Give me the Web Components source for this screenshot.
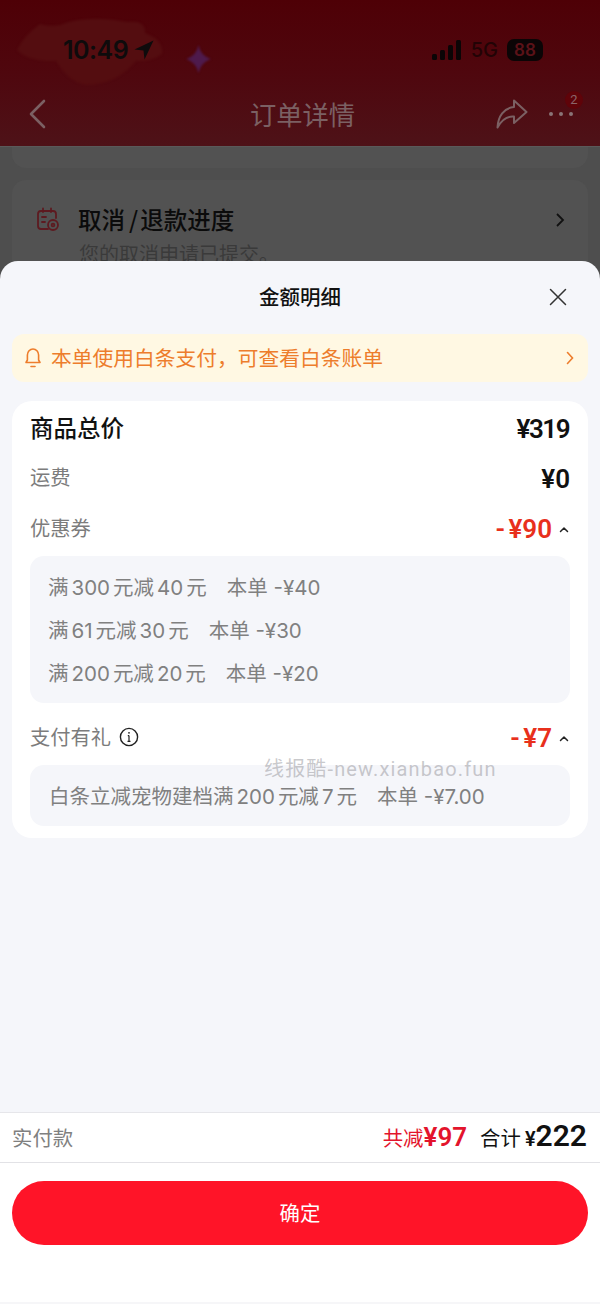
<!DOCTYPE html>
<html lang="zh-CN">
<head>
<meta charset="utf-8">
<title>金额明细</title>
<style>
    html, body {
        margin: 0;
        height: 100%;
    }

    body {
        width: 600px;
        height: 1304px;
        overflow: hidden;
        background: #4e4e4e;
        font-family: Roboto, "Noto Sans CJK SC", sans-serif;
    }

    order-page {
        height: 1304px;
    }
</style>
</head>
<body>
<order-page>
    <nav-header slot="header"></nav-header>
    <progress-card slot="behind"></progress-card>
    <detail-sheet slot="sheet">
        <notice-bar>本单使用白条支付，可查看白条账单</notice-bar>
        <price-card>
            <price-row kind="total" label="商品总价" amount="¥319"></price-row>
            <price-row label="运费" amount="¥0" style="margin-top:20px"></price-row>
            <price-row label="优惠券" amount="- ¥90" discount style="margin-top:21px"></price-row>
            <promo-box style="margin-top:12px">
                <promo-line text="满300元减40元" note="本单 -¥40"></promo-line>
                <promo-line text="满61元减30元" note="本单 -¥30"></promo-line>
                <promo-line text="满200元减20元" note="本单 -¥20"></promo-line>
            </promo-box>
            <price-row label="支付有礼" amount="- ¥7" discount info style="margin-top:20px"></price-row>
            <promo-box single style="margin-top:12px">
                <promo-line text="白条立减宠物建档满200元减7元" note="本单 -¥7.00"></promo-line>
            </promo-box>
        </price-card>
        <water-mark>线报酷-new.xianbao.fun</water-mark>
    </detail-sheet>
    <summary-footer slot="footer"></summary-footer>
</order-page>

<script>
class OrderPage extends HTMLElement {
    constructor() {
        super();
        this.attachShadow({ mode: 'open' });
        this.shadowRoot.innerHTML = `
            <style>
                :host {
                    display: flex;
                    flex-direction: column;
                    width: 600px;
                }
                .behind {
                    height: 114px;
                    overflow: hidden;
                    background: #4e4e4e;
                    flex: none;
                }
                .prev {
                    height: 21px;
                    margin: 0 12px;
                    border-radius: 0 0 14px 14px;
                    background: #525252;
                }
                .sheet {
                    flex: 1;
                    display: flex;
                    min-height: 0;
                }
            </style>
            <slot name="header"></slot>
            <div class="behind"><div class="prev"></div><slot name="behind"></slot></div>
            <div class="sheet"><slot name="sheet"></slot></div>
            <slot name="footer"></slot>
        `;
    }
}

class NavHeader extends HTMLElement {
    constructor() {
        super();
        this.attachShadow({ mode: 'open' });
        this.shadowRoot.innerHTML = `
            <style>
                :host {
                    display: block;
                    position: relative;
                    height: 147px;
                    background: linear-gradient(180deg, #4e0006 0%, #4f070e 50%, #4e1218 100%);
                    border-bottom: 1px solid #5a5a5a;
                    box-sizing: border-box;
                    overflow: hidden;
                }
                .blob {
                    position: absolute;
                    left: 16px;
                    top: 17px;
                    width: 148px;
                    height: 68px;
                    filter: blur(1px);
                }
                .star {
                    position: absolute;
                    left: 185px;
                    top: 44px;
                    filter: blur(1px);
                }
                .status {
                    position: relative;
                    display: flex;
                    justify-content: space-between;
                    align-items: center;
                    padding: 33px 57px 0 63px;
                    box-sizing: border-box;
                    height: 66px;
                }
                .time {
                    display: flex;
                    align-items: center;
                    gap: 6px;
                    color: #0e0b0c;
                    font: 600 25px/30px Inter, sans-serif;
                    letter-spacing: -.5px;
                }
                .right {
                    display: flex;
                    align-items: center;
                    gap: 9px;
                }
                .net {
                    color: #220305;
                    font: 500 20px/22px Inter, sans-serif;
                }
                .battery {
                    width: 36px;
                    height: 22px;
                    background: #0b0506;
                    border-radius: 7px;
                    color: #5b1218;
                    font: 600 17px/22px Inter, sans-serif;
                    text-align: center;
                }
                .bar {
                    position: relative;
                    display: flex;
                    align-items: center;
                    height: 81px;
                    padding: 14px 26px 0 28px;
                    box-sizing: border-box;
                }
                .title {
                    position: absolute;
                    left: 0;
                    right: 0;
                    top: 29px;
                    text-align: center;
                    color: #7b6063;
                    font: 400 26.3px/38px "Noto Sans CJK SC", sans-serif;
                    margin-left: 5px;
                }
                .actions {
                    margin-left: auto;
                    display: flex;
                    align-items: center;
                    gap: 20px;
                    position: relative;
                }
                .badge {
                    position: absolute;
                    right: -9px;
                    top: -8px;
                    width: 18px;
                    height: 18px;
                    border-radius: 50%;
                    background: #5f0309;
                    color: #8b6569;
                    font: 400 13px/18px Roboto, sans-serif;
                    text-align: center;
                }
            </style>
            <svg class="blob" viewBox="0 0 148 68">
                <path d="M1 33 Q8 18 24 7 Q32 10 44 8 Q70 -3 112 5 Q130 3 129 16 Q148 23 146 37 Q136 45 120 44 Q100 68 70 68 Q52 65 40 44 Q12 45 1 33Z" fill="#540d10"/>
            </svg>
            <svg class="star" width="27" height="30" viewBox="0 0 28 32">
                <path d="M14 1 Q16 12 27 16 Q16 20 14 31 Q12 20 1 16 Q12 12 14 1Z" fill="#4e1a4c"/>
            </svg>
            <div class="status">
                <div class="time">
                    <span>10:49</span>
                    <svg width="20" height="20" viewBox="0 0 20 20"><path d="M19.5 .5 L.5 9.5 L9.5 10.5 L10.5 19.5Z" fill="#0e0b0c"/></svg>
                </div>
                <div class="right">
                    <svg width="30" height="22" viewBox="0 0 30 22" fill="#0b0506">
                        <rect x="0" y="15" width="5" height="6" rx="1.5"/>
                        <rect x="8" y="11" width="5" height="10" rx="1.5"/>
                        <rect x="16" y="6" width="5" height="15" rx="1.5"/>
                        <rect x="24" y="1" width="5" height="20" rx="1.5"/>
                    </svg>
                    <span class="net">5G</span>
                    <span class="battery">88</span>
                </div>
            </div>
            <div class="bar">
                <svg width="18" height="30" viewBox="0 0 18 30" fill="none" stroke="#7b6063" stroke-width="2.6" stroke-linecap="round" stroke-linejoin="round"><path d="M16 2 L3 15 L16 28"/></svg>
                <div class="title">订单详情</div>
                <div class="actions">
                    <svg width="32" height="30" viewBox="0 0 32 30" fill="none" stroke="#7b6063" stroke-width="2" stroke-linejoin="round"><path d="M18 1.5 L30.5 13 L18 24 V17.5 C11 17 5.5 21 1.5 28.5 C2 17 8 9 18 8Z"/></svg>
                    <svg width="26" height="6" viewBox="0 0 26 6" fill="#8a7477"><circle cx="3" cy="3" r="2"/><circle cx="13" cy="3" r="2"/><circle cx="23" cy="3" r="2"/></svg>
                    <span class="badge">2</span>
                </div>
            </div>
        `;
    }
}

class ProgressCard extends HTMLElement {
    constructor() {
        super();
        this.attachShadow({ mode: 'open' });
        this.shadowRoot.innerHTML = `
            <style>
                :host {
                    display: block;
                    margin: 12px 12px 0;
                    height: 120px;
                    border-radius: 14px;
                    background: #525252;
                    padding: 0 23px 0 24px;
                    box-sizing: border-box;
                    color: #0b0b0b;
                }
                .row {
                    display: flex;
                    align-items: center;
                    padding-top: 24px;
                    height: 31px;
                    box-sizing: content-box;
                }
                h3 {
                    margin: 0 0 0 18px;
                    font: 500 23.5px/31px "Noto Sans CJK SC", sans-serif;
                    white-space: nowrap;
                }
                h3 span {
                    margin: 0 2px 0 4px;
                }
                svg:last-child {
                    margin-left: auto;
                }
                p {
                    margin: 5px 0 0 43px;
                    font: 400 20px/28px "Noto Sans CJK SC", sans-serif;
                    color: #3a3a3a;
                }
            </style>
            <div class="row">
                <svg width="24" height="26" viewBox="0 0 24 26" fill="none" stroke="#5d1a20" stroke-width="1.8" stroke-linecap="round">
                    <path d="M12 22 H5 Q2 22 2 19 V7 Q2 4 5 4 H17 Q20 4 20 7 V11"/>
                    <path d="M7 1.5 V5 M15 1.5 V5 M6 10 H10 M6 15 H9"/>
                    <circle cx="17" cy="18" r="5"/>
                    <circle cx="17" cy="18" r="1.4"/>
                </svg>
                <h3>取消<span>/</span>退款进度</h3>
                <svg width="10" height="16" viewBox="0 0 10 16" fill="none" stroke="#111" stroke-width="1.8"><path d="M2 2 L8 8 L2 14"/></svg>
            </div>
            <p>您的取消申请已提交。</p>
        `;
    }
}

class DetailSheet extends HTMLElement {
    constructor() {
        super();
        this.attachShadow({ mode: 'open' });
        this.shadowRoot.innerHTML = `
            <style>
                :host {
                    display: block;
                    flex: 1;
                    position: relative;
                    background: #f5f6fa;
                    border-radius: 18px 18px 0 0;
                    padding: 0 12px;
                }
                header {
                    position: relative;
                    height: 73px;
                    display: flex;
                    align-items: center;
                    justify-content: center;
                    font: 500 20.5px/28px "Noto Sans CJK SC", sans-serif;
                    color: #111;
                    padding-bottom: 4px;
                    box-sizing: border-box;
                }
                .close {
                    position: absolute;
                    right: 21px;
                    top: 27px;
                }
            </style>
            <header>
                金额明细
                <svg class="close" width="18" height="18" viewBox="0 0 18 18" stroke="#333" stroke-width="1.5" stroke-linecap="round"><path d="M1.5 1.5 L16.5 16.5 M16.5 1.5 L1.5 16.5"/></svg>
            </header>
            <slot></slot>
        `;
    }
}

class NoticeBar extends HTMLElement {
    constructor() {
        super();
        this.attachShadow({ mode: 'open' });
        this.shadowRoot.innerHTML = `
            <style>
                :host {
                    display: flex;
                    align-items: center;
                    height: 48px;
                    padding: 0 14px 0 12px;
                    border-radius: 12px;
                    background: #fff8e3;
                    color: #ed7d2c;
                    font: 400 20.75px/28px "Noto Sans CJK SC", sans-serif;
                }
                .text {
                    margin-left: 9px;
                    padding-bottom: 2px;
                }
                .arrow {
                    margin-left: auto;
                }
            </style>
            <svg width="18" height="22" viewBox="0 0 18 22" fill="none" stroke="#ed7d2c" stroke-width="1.6" stroke-linecap="round" stroke-linejoin="round">
                <path d="M2 15.5 H16 L14.6 13 V8 A5.6 6 0 0 0 3.4 8 V13Z"/>
                <path d="M7 19.5 H11"/>
            </svg>
            <span class="text"><slot></slot></span>
            <svg class="arrow" width="8" height="14" viewBox="0 0 8 14" fill="none" stroke="#ed7d2c" stroke-width="1.6" stroke-linecap="round"><path d="M1.5 1.5 L6.5 7 L1.5 12.5"/></svg>
        `;
    }
}

class PriceCard extends HTMLElement {
    constructor() {
        super();
        this.attachShadow({ mode: 'open' });
        this.shadowRoot.innerHTML = `
            <style>
                :host {
                    display: block;
                    margin-top: 19px;
                    padding: 12px 18px 12px;
                    border-radius: 20px;
                    background: #fff;
                }
            </style>
            <slot></slot>
        `;
    }
}

class PriceRow extends HTMLElement {
    connectedCallback() {
        if (this.shadowRoot) return;
        this.attachShadow({ mode: 'open' });
        const total = this.getAttribute('kind') === 'total';
        const discount = this.hasAttribute('discount');
        const info = this.hasAttribute('info') ? `
            <svg class="info" width="20" height="20" viewBox="0 0 20 20" fill="none" stroke="#222" stroke-width="1.4">
                <circle cx="10" cy="10" r="8.6"/>
                <path d="M10 8.6 V14.4 M8.5 14.4 H11.5 M8.8 8.6 H10" stroke-width="1.2"/>
                <circle cx="10" cy="5.8" r=".9" fill="#222" stroke="none"/>
            </svg>` : '';
        const caret = discount ? `
            <svg class="caret" width="10" height="7" viewBox="0 0 10 7" fill="none" stroke="#222" stroke-width="1.5" stroke-linecap="round" stroke-linejoin="round"><path d="M1.5 5.5 L5 2 L8.5 5.5"/></svg>` : '';
        this.shadowRoot.innerHTML = `
            <style>
                :host {
                    display: flex;
                    align-items: center;
                    height: 30px;
                }
                .label {
                    color: ${total ? '#111' : '#7c7c7c'};
                    font: ${total ? '500 23.5px' : '400 20.3px'}/30px "Noto Sans CJK SC", sans-serif;
                    margin-bottom: ${total ? '2px' : '4px'};
                }
                .info {
                    margin-left: 8px;
                    margin-bottom: 2px;
                }
                .amount {
                    margin-left: auto;
                    margin-top: ${discount ? '0' : '2px'};
                    margin-right: ${total ? '1px' : '0'};
                    color: ${discount ? '#e8301c' : '#111'};
                    font: 600 26px/30px Roboto, sans-serif;
                    letter-spacing: ${total ? '-1.5px' : '0'};
                    word-spacing: -3px;
                }
                .caret {
                    margin-left: 7px;
                    margin-right: 1px;
                }
            </style>
            <span class="label">${this.getAttribute('label')}</span>${info}
            <span class="amount">${this.getAttribute('amount')}</span>${caret}
        `;
    }
}

class PromoBox extends HTMLElement {
    constructor() {
        super();
        this.attachShadow({ mode: 'open' });
        this.shadowRoot.innerHTML = `
            <style>
                :host {
                    display: flex;
                    flex-direction: column;
                    gap: 15px;
                    padding: 18px 18px 15px;
                    border-radius: 14px;
                    background: #f5f6fa;
                }
                :host([single]) {
                    padding: 18px 19px 15px;
                }
            </style>
            <slot></slot>
        `;
    }
}

class PromoLine extends HTMLElement {
    connectedCallback() {
        if (this.shadowRoot) return;
        this.attachShadow({ mode: 'open' });
        // digits get a little air around them, like the original text
        const text = this.getAttribute('text').replace(/\d+/g, n => `<span class="n">${n}</span>`);
        this.shadowRoot.innerHTML = `
            <style>
                :host {
                    display: block;
                    color: #808080;
                    font: 400 20.5px/28px Inter, "Noto Sans CJK SC", sans-serif;
                    white-space: nowrap;
                }
                .n {
                    margin: 0 3px;
                }
                .note {
                    margin-left: 20px;
                }
            </style>
            ${text}<span class="note">${this.getAttribute('note')}</span>
        `;
    }
}

class WaterMark extends HTMLElement {
    constructor() {
        super();
        this.attachShadow({ mode: 'open' });
        this.shadowRoot.innerHTML = `
            <style>
                :host {
                    position: absolute;
                    left: 264px;
                    top: 494px;
                    color: rgba(165, 165, 170, .6);
                    font: 400 20px/28px Roboto, "Noto Sans CJK SC", sans-serif;
                    letter-spacing: 1.15px;
                    white-space: nowrap;
                }
            </style>
            <slot></slot>
        `;
    }
}

class SummaryFooter extends HTMLElement {
    constructor() {
        super();
        this.attachShadow({ mode: 'open' });
        this.shadowRoot.innerHTML = `
            <style>
                :host {
                    display: block;
                    height: 192px;
                    box-sizing: border-box;
                    background: #fff;
                    border-top: 1px solid #e6e6ea;
                    border-bottom: 2px solid #f6f6f8;
                    flex: none;
                }
                .row {
                    display: flex;
                    align-items: center;
                    height: 50px;
                    box-sizing: border-box;
                    padding: 0 13px 1px 12px;
                    border-bottom: 1px solid #e2e2e6;
                }
                .label {
                    color: #808080;
                    font: 400 20.4px/28px "Noto Sans CJK SC", sans-serif;
                }
                .saved {
                    margin-left: auto;
                    color: #e3142c;
                    font: 400 20.4px/28px "Noto Sans CJK SC", sans-serif;
                }
                .saved b {
                    font: 600 26px/28px Roboto, sans-serif;
                }
                .sum {
                    margin-left: 13px;
                    color: #111;
                    font: 400 20.4px/28px "Noto Sans CJK SC", sans-serif;
                }
                .sum em {
                    font: 600 20px/28px Roboto, sans-serif;
                    margin-left: 4px;
                }
                .sum b {
                    font: 600 30px/28px Roboto, sans-serif;
                }
                button {
                    display: block;
                    width: 576px;
                    height: 64px;
                    margin: 18px 12px 0;
                    border: 0;
                    border-radius: 32px;
                    background: #ff1428;
                    color: #fff;
                    font: 400 20.4px/28px "Noto Sans CJK SC", sans-serif;
                    padding: 0 0 2px;
                }
            </style>
            <div class="row">
                <span class="label">实付款</span>
                <span class="saved">共减<b>¥97</b></span>
                <span class="sum">合计<em>¥</em><b>222</b></span>
            </div>
            <button>确定</button>
        `;
    }
}

window.customElements.define('order-page', OrderPage);
window.customElements.define('nav-header', NavHeader);
window.customElements.define('progress-card', ProgressCard);
window.customElements.define('detail-sheet', DetailSheet);
window.customElements.define('notice-bar', NoticeBar);
window.customElements.define('price-card', PriceCard);
window.customElements.define('price-row', PriceRow);
window.customElements.define('promo-box', PromoBox);
window.customElements.define('promo-line', PromoLine);
window.customElements.define('water-mark', WaterMark);
window.customElements.define('summary-footer', SummaryFooter);
</script>
</body>
</html>
